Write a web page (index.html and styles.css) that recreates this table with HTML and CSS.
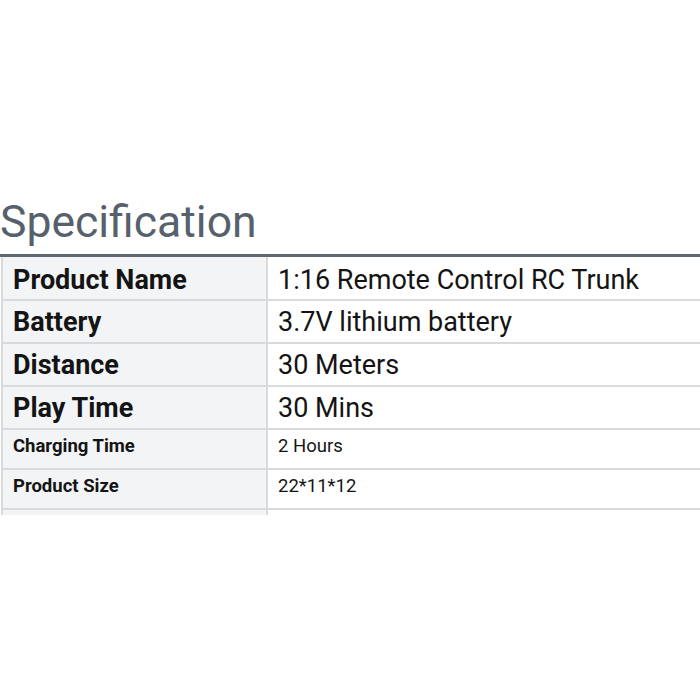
FILE: index.html
```html
<!DOCTYPE html>
<html>
<head>
<meta charset="utf-8">
<link rel="stylesheet" href="styles.css">
</head>
<body>
<div class="page">
  <h1 class="title">Specification</h1>
  <div class="clip">
    <table class="spec">
      <tr class="big first"><th>Product Name</th><td>1:16 Remote Control RC Trunk</td></tr>
      <tr class="big"><th>Battery</th><td>3.7V lithium battery</td></tr>
      <tr class="big"><th>Distance</th><td>30 Meters</td></tr>
      <tr class="big"><th>Play Time</th><td>30 Mins</td></tr>
      <tr class="small"><th>Charging Time</th><td>2 Hours</td></tr>
      <tr class="small"><th>Product Size</th><td>22*11*12</td></tr>
      <tr class="small"><th>&nbsp;</th><td>&nbsp;</td></tr>
    </table>
  </div>
</div>
</body>
</html>
```
FILE: styles.css
```css
html, body {
  margin: 0;
  padding: 0;
  background: #ffffff;
}
.page {
  width: 700px;
  height: 700px;
  padding-top: 197px;
  box-sizing: border-box;
  font-family: Roboto, "Liberation Sans", sans-serif;
}
.title {
  margin: 0;
  font-size: 44.5px;
  font-weight: 400;
  line-height: 50px;
  color: #56616c;
  height: 57px;
}
.clip {
  height: 258px;
  overflow: hidden;
  border-top: 3px solid #5d6975;
}
.spec {
  border-collapse: collapse;
  width: 712px;
  margin-left: 1px;
}
.spec th, .spec td {
  border: 2px solid #d9dadc;
  padding: 0 0 0 10px;
  text-align: left;
  color: #141414;
  vertical-align: middle;
}
.spec .first th, .spec .first td {
  border-top: none;
  padding-top: 4px;
  height: 38px;
}
.spec th {
  width: 253px;
  background: #f3f4f6;
  font-weight: 700;
}
.spec td {
  background: #ffffff;
  font-weight: 400;
}
.big th, .big td {
  font-size: 27px;
  height: 41px;
  line-height: 32px;
}
.small th, .small td {
  font-size: 18.5px;
  height: 32px;
  line-height: 24px;
  padding-bottom: 6px;
}
```
